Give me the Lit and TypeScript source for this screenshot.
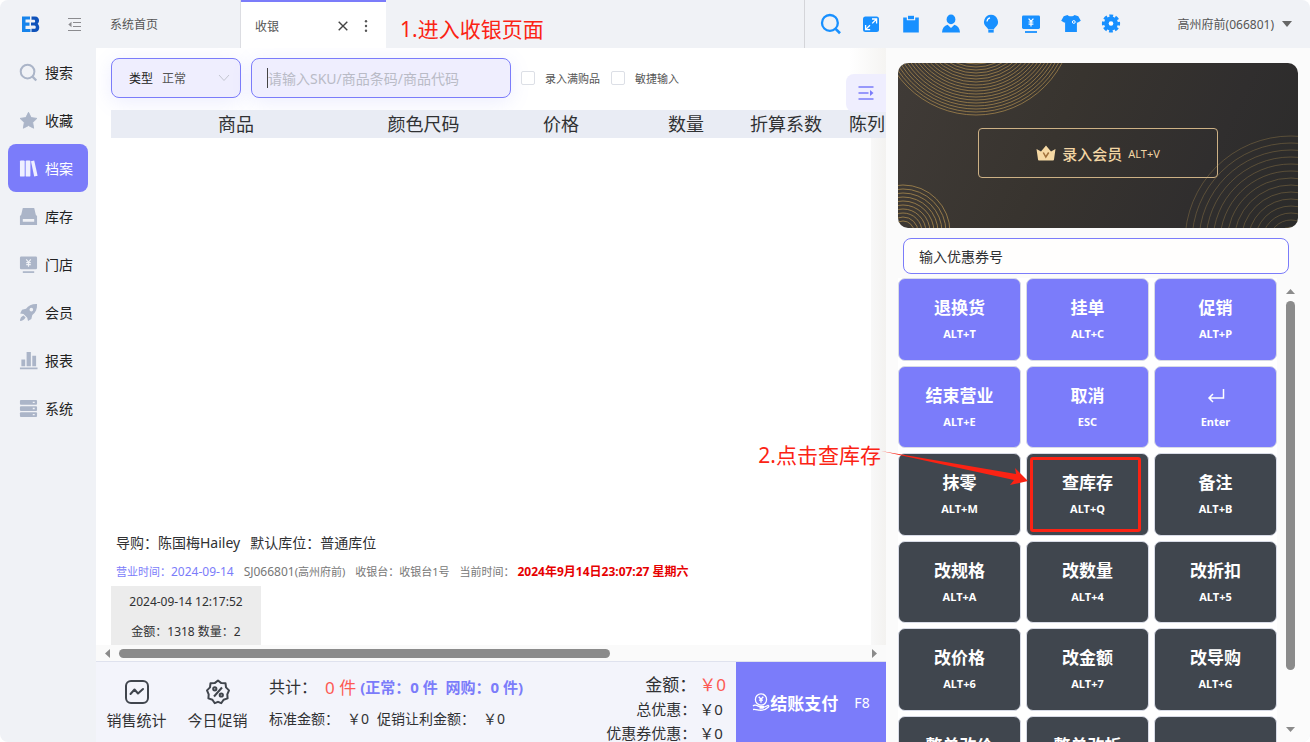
import { LitElement, html, css, svg, nothing } from "lit";
import { customElement } from "lit/decorators.js";
import { classMap } from "lit/directives/class-map.js";

const yen = svg`<path d="M7.6 4.6 10 7.4l2.4-2.8M10 7.4v5M7.6 8h4.8M7.6 10.2h4.8" fill="none" stroke="var(--hole)" stroke-width="1.2"/>`;

const glyphs: Record<string, unknown> = {
  search: svg`<circle cx="9" cy="9" r="7.2" fill="none" stroke="currentColor" stroke-width="2.1"/><path d="m14.2 14.4 4 4" stroke="currentColor" stroke-width="2.4"/>`,
  star: svg`<path d="m10 1.4 2.7 5.5 6.1.9-4.4 4.3 1 6-5.4-2.8-5.4 2.8 1-6L1.2 7.8l6.1-.9z" fill="currentColor" stroke="currentColor" stroke-linejoin="round"/>`,
  books: svg`<rect x="1" y="1.5" width="5" height="17" rx="1" fill="currentColor"/><rect x="7" y="1.5" width="5" height="17" rx="1" fill="currentColor"/><path d="m12.6 2.4 3.4-.8 3.6 15.9-3.6.9z" fill="currentColor"/>`,
  box: svg`<path d="M4 1h12l2 8.5H2z" fill="currentColor"/><path d="M1 9h18v10H1z" fill="currentColor"/><path d="M4 12.5h12v3H4z" fill="var(--hole)"/>`,
  screen: svg`<rect x="1" y="1.5" width="18" height="13.5" rx="1.4" fill="currentColor"/><path d="M4 18h12" stroke="currentColor" stroke-width="1.8"/>${yen}`,
  rocket: svg`<path d="M19 1c-5.5-.2-9 1.4-11.600 5L3.200 7.200 1.200 11l3.600.6 3.900 3.900.8 3.500 3.500-2.200 1-4.200C17.600 10 19.300 6.500 19 1z" fill="currentColor"/><path d="M4.800 13.200 6.900 15.300C5.600 18 3.800 18.700 1 19c.1-2.800 1.200-4.800 3.800-5.800z" fill="currentColor"/><circle cx="13" cy="7" r="1.900" fill="var(--hole)"/>`,
  bars: svg`<path d="M2.500 9h4v7h-4zM8 1h4.500v15H8zM14 5h4v11h-4zM1 17.400h18.500v1.800H1z" fill="currentColor"/>`,
  server: svg`<rect x="1" y="1" width="18" height="5" rx="1" fill="currentColor"/><rect x="1" y="7.500" width="18" height="5" rx="1" fill="currentColor"/><rect x="1" y="14" width="18" height="5" rx="1" fill="currentColor"/><path d="M14.500 3.500h2M14.500 10h2M14.500 16.500h2" stroke="var(--hole)" stroke-width="1.400"/>`,
  expand: svg`<rect x="2" y="2.500" width="16" height="15.500" rx="2.500" fill="currentColor"/><path d="M11 5h4.600v4.600M15.400 5.200l-4.200 4.200M4.600 11v4.600h4.600M4.800 15.400l4.200-4.200" fill="none" stroke="#fff" stroke-width="1.300"/>`,
  clipboard: svg`<path d="M2.200 3.500h3.600v2.800h8.400V3.500h3.600V18.500H2.200z" fill="currentColor"/><path d="M7 1.800h6v3.400H7z" fill="currentColor"/>`,
  user: svg`<ellipse cx="10" cy="5.400" rx="4.400" ry="4.900" fill="currentColor"/><path d="M1 18.500c.3-4.500 2.300-7 5.600-7.800L10 14l3.400-3.300c3.300.8 5.300 3.300 5.600 7.800z" fill="currentColor"/>`,
  bulb: svg`<path d="M10 .8a7 7 0 0 0-4.400 12.400c.8.700 1.300 1.300 1.500 2.200h5.800c.2-.9.700-1.500 1.500-2.200A7 7 0 0 0 10 .8z" fill="currentColor"/><path d="M7.300 17.300h5.400" stroke="currentColor" stroke-width="2.600"/><path d="M6 7.500a4 4 0 0 1 3-3.600" fill="none" stroke="#fff" stroke-width="1.200"/>`,
  shirt: svg`<path d="M6.500 1c1 1.700 6 1.700 7 0l3.800 1.200 2.500 4.500-3.300 2.100-.6-.6V18H4.100V8.200l-.6.6L.2 6.700l2.500-4.500z" fill="currentColor"/><circle cx="12.800" cy="8" r="1.400" fill="none" stroke="#fff"/>`,
  gear: svg`<circle cx="10" cy="9.500" r="6.900" fill="currentColor"/><circle cx="10" cy="9.500" r="7.600" fill="none" stroke="currentColor" stroke-width="3" stroke-dasharray="3.700 2.270" stroke-dashoffset="1.850"/><circle cx="10" cy="9.500" r="2.300" fill="#fff"/>`,
};

const icon = (name: string, size: number) =>
  html`<svg class="icon" width=${size} height=${size} viewBox="0 0 20 20" aria-hidden="true">${glyphs[name]}</svg>`;

const menu = [
  ["search", "搜索"],
  ["star", "收藏"],
  ["books", "档案"],
  ["box", "库存"],
  ["screen", "门店"],
  ["rocket", "会员"],
  ["bars", "报表"],
  ["server", "系统"],
];

const tools = [
  ["search", "搜索"],
  ["expand", "全屏"],
  ["clipboard", "单据"],
  ["user", "会员"],
  ["bulb", "提示"],
  ["screen", "收银"],
  ["shirt", "商品"],
  ["gear", "设置"],
];

const columns = ["商品", "颜色尺码", "价格", "数量", "折算系数", "陈列"];

const keys = [
  ["退换货", "ALT+T"],
  ["挂单", "ALT+C"],
  ["促销", "ALT+P"],
  ["结束营业", "ALT+E"],
  ["取消", "ESC"],
  ["", "Enter"],
  ["抹零", "ALT+M"],
  ["查库存", "ALT+Q"],
  ["备注", "ALT+B"],
  ["改规格", "ALT+A"],
  ["改数量", "ALT+4"],
  ["改折扣", "ALT+5"],
  ["改价格", "ALT+6"],
  ["改金额", "ALT+7"],
  ["改导购", "ALT+G"],
  ["整单改价", ""],
  ["整单改折", ""],
  [" ", ""],
];

const shared = css`
  :host {
    box-sizing: border-box;
    font-family: "Noto Sans", "Noto Sans CJK SC", sans-serif;
    color: #303133;
  }
  * {
    box-sizing: border-box;
  }
  button,
  input,
  select {
    font: inherit;
    color: inherit;
    margin: 0;
    padding: 0;
    border: 0;
    background: none;
    outline: 0;
  }
  svg {
    display: block;
    flex: none;
  }
`;

@customElement("pos-header")
class PosHeader extends LitElement {
  static styles = [
    shared,
    css`
      :host {
        display: flex;
        height: 48px;
        font-size: 12px;
        color: #555;
        position: relative;
      }
      .brand {
        width: 96px;
        display: flex;
        align-items: center;
        gap: 28px;
        padding-left: 22px;
      }
      .tab {
        width: 145px;
        display: flex;
        align-items: center;
        padding: 0 14px;
        color: inherit;
        text-decoration: none;
      }
      .home {
        border-right: 1px solid #dcdde2;
      }
      .current {
        background: #fff;
        border-top: 2px solid #7b7cfa;
        padding-top: 2px;
      }
      .name {
        flex: 1;
      }
      .actions {
        display: flex;
        gap: 12px;
        align-items: center;
      }
      .right {
        margin-left: auto;
        width: 506px;
        border-left: 1px solid #d4d5d9;
        display: flex;
        align-items: center;
        padding: 0 18px 0 15px;
      }
      .tools {
        display: flex;
        gap: 18px;
        color: #1890ff;
        --hole: #fff;
      }
      .tools button {
        width: 22px;
        height: 22px;
        display: grid;
        place-items: center;
      }
      .account {
        margin-left: auto;
        display: flex;
        align-items: center;
        gap: 8px;
      }
      .note {
        position: absolute;
        left: 400px;
        top: 13px;
        line-height: 32px;
        font-size: 21px;
        color: #fb2314;
      }
    `,
  ];
  render() {
    return html`
      <div class="brand">
        <svg width="18" height="17" viewBox="0 0 18 17" aria-hidden="true">
          <path d="M0 .5h8v3H3.500v3H7.500v3.200h-4v3.200H8.500v3.100H0z" fill="#1684ec" />
          <path d="M9.500.5H13c4.500 0 5 5.200 2.600 7.300 3 2.500 1.900 8.200-2.900 8.200H9.500v-3.200h3c1.700 0 1.700-3.300 0-3.300H9V6.600h3c1.500 0 1.500-2.900 0-2.900H9.500z" fill="#0f52ba" />
        </svg>
        <svg width="13" height="13" viewBox="0 0 13 13" aria-hidden="true">
          <path d="M0 .5h13M5 4.500h8M5 8.500h8M0 12.500h13" stroke="#8b8b8f" stroke-width="1" />
          <path d="M3.500 3.800v5.400L.3 6.500z" fill="#8b8b8f" />
        </svg>
      </div>
      <a class="tab home" href="#home">系统首页</a>
      <div class="tab current">
        <span class="name">收银</span>
        <span class="actions">
          <button aria-label="关闭">
            <svg width="10" height="10" viewBox="0 0 10 10"><path d="m.7.7 8.600 8.600M9.300.7.7 9.300" stroke="#444" stroke-width="1.400" /></svg>
          </button>
          <button aria-label="更多">
            <svg width="12" height="12" viewBox="0 0 12 12" fill="#555"><circle cx="6" cy="1.300" r="1.200" /><circle cx="6" cy="6" r="1.200" /><circle cx="6" cy="10.700" r="1.200" /></svg>
          </button>
        </span>
      </div>
      <div class="right">
        <div class="tools">
          ${tools.map(([g, label], i) => html`<button aria-label=${label}>${icon(g, i === 0 ? 22 : 20)}</button>`)}
        </div>
        <button class="account">
          高州府前(066801)
          <svg width="10" height="6" viewBox="0 0 10 6"><path d="M0 0h10L5 6z" fill="#666" /></svg>
        </button>
      </div>
      <div class="note">1.进入收银页面</div>
    `;
  }
}

@customElement("pos-menu")
class PosMenu extends LitElement {
  static styles = [
    shared,
    css`
      nav {
        display: flex;
        flex-direction: column;
        width: 96px;
        padding: 0 8px;
      }
      a {
        display: flex;
        align-items: center;
        gap: 7px;
        height: 48px;
        padding-left: 11px;
        font-size: 14px;
        color: #222;
        text-decoration: none;
        border-radius: 8px;
      }
      .icon {
        color: #abb5c8;
        --hole: #f0f2f6;
      }
      .active {
        background: #7b7cfa;
        color: #fff;
      }
      .active .icon {
        color: #efefff;
      }
    `,
  ];
  render() {
    return html`<nav>
      ${menu.map(
        ([g, label], i) => html`<a href="#${g}" class=${classMap({ active: i === 2 })}>${icon(g, 19)}<span>${label}</span></a>`
      )}
    </nav>`;
  }
}

@customElement("pos-workspace")
class PosWorkspace extends LitElement {
  static styles = [
    shared,
    css`
      :host {
        display: flex;
        flex-direction: column;
        flex: 1;
        min-width: 0;
        background: #fff;
        position: relative;
      }
      .sheet {
        flex: 1;
        min-height: 0;
        overflow: hidden;
        display: flex;
        flex-direction: column;
        padding-left: 15px;
        background: linear-gradient(to left, #f3f2f0, #f8f8f8) right / 15px 100% no-repeat;
      }
      .toolbar {
        display: flex;
        align-items: center;
        height: 62px;
        padding-bottom: 2px;
        background: linear-gradient(to left, #f5f4f2, #fff 36px);
        font-size: 11px;
        color: #555;
      }
      .field {
        display: flex;
        align-items: center;
        height: 40px;
        border: 1px solid #7b7cfa;
        border-radius: 8px;
        background: #efeefe;
        box-shadow: 0 4px 20px rgba(123, 124, 250, 0.14);
        padding: 0 10px 0 17px;
        margin-right: 10px;
      }
      .kind {
        width: 130px;
        font-size: 12px;
        color: #222;
      }
      .kind select {
        appearance: none;
        flex: 1;
        margin-left: 9px;
        color: #555;
      }
      .sku {
        width: 260px;
        font-size: 14px;
        padding-left: 15px;
      }
      .sku input {
        flex: 1;
        height: 20px;
        min-width: 0;
        border-left: 1px solid #444;
      }
      .sku input::placeholder {
        color: #b9bbc6;
        opacity: 1;
      }
      .tick {
        display: flex;
        align-items: center;
        gap: 10px;
        margin-right: 11px;
      }
      .tick input {
        appearance: none;
        width: 14px;
        height: 14px;
        border: 1px solid #dcdfe6;
        border-radius: 2px;
        background: #fff;
      }
      .toggle {
        position: absolute;
        right: 0;
        top: 26px;
        width: 40px;
        height: 38px;
        border-radius: 8px 0 0 8px;
        background: #efeefe;
        display: grid;
        place-items: center;
      }
      table {
        table-layout: fixed;
        border-collapse: collapse;
        width: 825px;
      }
      th {
        height: 28px;
        padding: 0;
        font-size: 18px;
        line-height: 28px;
        font-weight: 400;
        background: #e9ecf4;
      }
      .c0 {
        width: 250px;
      }
      .c1 {
        width: 125px;
      }
      .c2 {
        width: 150px;
      }
      .c5 {
        text-align: left;
        padding-left: 13px;
      }
      .guide {
        margin-top: auto;
        padding-left: 5px;
        display: flex;
        gap: 10px;
        font-size: 14px;
        line-height: 28px;
      }
      .info {
        padding-left: 5px;
        display: flex;
        align-items: center;
        gap: 10px;
        height: 29px;
        font-size: 11px;
        line-height: 28px;
        color: #777;
        white-space: nowrap;
      }
      .info b {
        font-size: 12px;
        color: #e60000;
      }
      .day {
        color: #7b7cfa;
      }
      .code {
        font-size: 12px;
      }
      .ticket {
        width: 150px;
        height: 59px;
        padding-top: 1px;
        background: #ececec;
        font-size: 12px;
        line-height: 30px;
        text-align: center;
      }
      .hbar {
        height: 16px;
        display: flex;
        align-items: center;
        gap: 9px;
        padding: 0 9px;
        background: #fafafa;
      }
      .track {
        flex: 1;
      }
      .thumb {
        width: 66%;
        height: 9px;
        border-radius: 5px;
        background: #8b8b8b;
      }
      .footer {
        display: flex;
        height: 81px;
        border-top: 1px solid #dfe2ee;
        background: #f3f4fb;
        overflow: hidden;
      }
      .stat {
        display: flex;
        flex-direction: column;
        align-items: center;
        gap: 3px;
        width: 81px;
        padding-top: 17px;
        font-size: 15px;
        line-height: 24px;
        white-space: nowrap;
      }
      .totals {
        flex: 1;
        padding: 10px 0 0 11px;
        font-size: 14px;
        line-height: 31px;
        white-space: nowrap;
      }
      .line {
        display: flex;
        gap: 8px;
      }
      .lead {
        font-size: 16px;
      }
      .totals b {
        font-size: 15px;
        color: #7b7cfa;
      }
      .totals .red {
        margin-right: -4px;
      }
      .red {
        color: #fd5a53;
        font-size: 17px;
      }
      .sums {
        display: grid;
        grid-template-columns: auto auto;
        align-content: start;
        justify-items: start;
        column-gap: 3px;
        padding: 11px 10px 0 0;
        font-size: 15px;
        line-height: 24px;
        white-space: nowrap;
      }
      .caption {
        justify-self: end;
      }
      .sums .caption:first-child {
        font-size: 17px;
      }
      .pay {
        width: 150px;
        background: #7b7cfa;
        color: #fff;
        font-size: 14px;
        display: flex;
        align-items: center;
        justify-content: center;
      }
      .pay b {
        font-size: 17px;
        margin-right: 16px;
      }
    `,
  ];
  render() {
    return html`
      <div class="sheet">
        <div class="toolbar">
          <label class="field kind">
            类型
            <select>
              <option>正常</option>
            </select>
            <svg width="12" height="8" viewBox="0 0 12 8"><path d="m1 1 5 5.500L11 1" fill="none" stroke="#c3c5d0" /></svg>
          </label>
          <div class="field sku">
            <input type="text" aria-label="商品" placeholder="请输入SKU/商品条码/商品代码" />
          </div>
          <label class="tick"><input type="checkbox" />录入满购品</label>
          <label class="tick"><input type="checkbox" />敏捷输入</label>
        </div>
        <table>
          <thead>
            <tr>
              ${columns.map((c, i) => html`<th class="c${i}">${c}</th>`)}
            </tr>
          </thead>
        </table>
        <div class="guide"><span>导购：陈国梅Hailey</span><span>默认库位：普通库位</span></div>
        <div class="info">
          <span class="day">营业时间：<span class="code">2024-09-14</span></span>
          <span><span class="code">SJ066801</span>(高州府前)</span>
          <span>收银台：收银台1号</span>
          <span>当前时间： <b>2024年9月14日23:07:27 星期六</b></span>
        </div>
        <div class="ticket">
          <div>2024-09-14 12:17:52</div>
          <div>金额：1318 数量：2</div>
        </div>
      </div>
      <div class="hbar">
        <svg width="5" height="9" viewBox="0 0 5 9"><path d="M5 0v9L0 4.500z" fill="#8b8b8b" /></svg>
        <div class="track"><div class="thumb"></div></div>
        <svg width="5" height="9" viewBox="0 0 5 9"><path d="M0 0v9l5-4.500z" fill="#8b8b8b" /></svg>
      </div>
      <div class="footer">
        <button class="stat">
          <svg width="26" height="26" viewBox="0 0 26 26" fill="none" stroke="#40454d" stroke-width="2" stroke-linecap="round" stroke-linejoin="round">
            <rect x="2" y="2" width="22" height="22" rx="5" />
            <path d="m6.500 15 4-4.500 3.500 4 5-4.500" />
          </svg>
          销售统计
        </button>
        <button class="stat">
          <svg width="26" height="26" viewBox="0 0 26 26" fill="none" stroke="#40454d" stroke-width="2" stroke-linejoin="round">
            <path d="m13 1.500 3.300 2.600 4.200.1.500 4.200 3 3-1.700 3.900.3 4.100-4 1.300-2.400 3.500L13 22.800l-3.200 1.400-2.400-3.500-4-1.300.3-4.100L2 11.400l3-3 .5-4.200 4.200-.1z" />
            <path d="m17 8.500-8 9" />
            <circle cx="9.800" cy="9.800" r="1.600" />
            <circle cx="16.300" cy="16" r="1.600" />
          </svg>
          今日促销
        </button>
        <div class="totals">
          <div class="line"><span class="lead">共计：</span><span class="red">0 件</span><b>(正常：0 件&nbsp; 网购：0 件)</b></div>
          <div class="line"><span>标准金额：</span><span>￥0</span><span>促销让利金额：</span><span>￥0</span></div>
        </div>
        <div class="sums">
          <span class="caption">金额：</span><span class="red">￥0</span>
          <span class="caption">总优惠：</span><span>￥0</span>
          <span class="caption">优惠券优惠：</span><span>￥0</span>
        </div>
        <button class="pay">
          <svg width="18" height="18" viewBox="0 0 18 18" fill="none" stroke="#fff" stroke-width="1.300">
            <circle cx="9" cy="6.500" r="5.600" />
            <path d="m6.700 3.800 2.300 2.500 2.300-2.500M9 6.300v3.500M7 7.200h4M1 13c2-2 4-.5 6 .5h4c1 0 1 1.500 0 1.500H7.500M11.500 14.500l4.500-2c1 0 1 1 .5 1.500-3 3-6 3.500-9 3.200-2-.2-4-1.200-6.500-.7" />
          </svg>
          <b>结账支付</b>F8
        </button>
      </div>
      <button class="toggle" aria-label="展开">
        <svg width="16" height="14" viewBox="0 0 16 14">
          <path d="M.5 1h15M.5 7h10M.5 13h15" stroke="#7b7cfa" stroke-width="1.500" />
          <path d="M12 4v6l3.500-3z" fill="#7b7cfa" />
        </svg>
      </button>
    `;
  }
}

const rings = (cx: number, cy: number, from: number, to: number, step: number, opacity: number) => {
  const out = [];
  for (let r = from; r >= to; r -= step) {
    out.push(svg`<circle cx=${cx} cy=${cy} r=${r} fill="none" stroke="#b08f50" stroke-opacity=${opacity}/>`);
  }
  return out;
};

@customElement("pos-panel")
class PosPanel extends LitElement {
  static styles = [
    shared,
    css`
      :host {
        display: flex;
        flex-direction: column;
        width: 424px;
        flex: none;
        padding: 15px 12px 0;
        background: #fbfbfb;
        position: relative;
      }
      .card {
        display: grid;
        place-items: center;
        height: 165px;
        border-radius: 10px;
        overflow: hidden;
        background: linear-gradient(115deg, #403b37, #38342f 40%, #302e2e 75%, #2b2b2a);
      }
      .art,
      .member {
        grid-area: 1 / 1;
      }
      .art {
        width: 100%;
        height: 165px;
      }
      .member {
        width: 240px;
        height: 50px;
        margin-top: 15px;
        border: 1px solid #cdb185;
        border-radius: 4px;
        display: flex;
        align-items: center;
        justify-content: center;
        gap: 6px;
        color: #f3d6a4;
        font-size: 11px;
      }
      .member b {
        font-size: 15px;
        font-weight: 500;
      }
      .coupon {
        height: 36px;
        margin: 10px 9px 0 5px;
        padding: 0 15px;
        border: 1px solid #7b7cfa;
        border-radius: 8px;
        background: #fffefd;
        font-size: 14px;
      }
      .coupon::placeholder {
        color: #303133;
        opacity: 1;
      }
      .deck {
        flex: 1 1 0;
        min-height: 0;
        margin-top: 4px;
        display: flex;
        overflow: hidden;
      }
      .keys {
        flex: 1;
        display: grid;
        grid-template-columns: repeat(3, 1fr);
        grid-auto-rows: 83px 82px;
        gap: 5px;
        background: #fff;
        align-content: start;
      }
      .key {
        position: relative;
        display: flex;
        flex-direction: column;
        align-items: center;
        gap: 6px;
        padding-top: 17px;
        border: 1px solid #d8dbe6;
        border-radius: 7px;
        background: #40464e;
        color: #fff;
        font-weight: 700;
        font-size: 17px;
        line-height: 24px;
      }
      .key small {
        font-size: 11px;
        line-height: 16px;
      }
      .key svg {
        height: 24px;
      }
      .violet {
        background: #7b7cfa;
      }
      .mark {
        position: absolute;
        inset: 3px 7px 3px 3px;
        border: 3px solid #fb2314;
        border-radius: 3px;
      }
      .vbar {
        width: 21px;
        padding: 11px 0 10px 6px;
        display: flex;
        flex-direction: column;
        align-items: center;
        gap: 7px;
      }
      .vtrack {
        flex: 1;
      }
      .vthumb {
        width: 9px;
        height: 88%;
        border-radius: 5px;
        background: #8b8b8b;
      }
      .hint {
        position: absolute;
        right: 282px;
        top: 391px;
        display: flex;
        color: #fb2314;
        font-size: 21px;
        line-height: 32px;
        white-space: nowrap;
      }
    `,
  ];
  render() {
    return html`
      <div class="card">
        <svg class="art" viewBox="0 0 400 165" preserveAspectRatio="xMidYMid slice" aria-hidden="true">
          ${rings(78, -45, 97, 45, 3, 0.7)} ${rings(5, 169, 47, 10, 4, 0.75)} ${rings(393, 179, 106, 15, 7, 0.35)}
        </svg>
        <button class="member">
          <svg width="20" height="16" viewBox="0 0 20 16">
            <path d="m.5 4 4.500 2.500L10 .5l5 6L19.500 4 18 14.500q0 1-1 1H3q-1 0-1-1z" fill="#f6d9a4" />
            <path d="m7.300 7.500 2.500 4.500 2.900-4.500" fill="none" stroke="#a0713c" stroke-width="1.500" />
          </svg>
          <b>录入会员</b><span>ALT+V</span>
        </button>
      </div>
      <input class="coupon" type="text" aria-label="优惠券号" placeholder="输入优惠券号" />
      <div class="deck">
        <div class="keys">
          ${keys.map(
            ([name, hot], i) => html`<button class=${classMap({ key: true, violet: i < 6 })}>
              ${name
                ? html`<span>${name}</span>`
                : html`<svg width="18" viewBox="0 0 18 24"><path d="M16.500 5v9H2M6 10l-4 4 4 4" fill="none" stroke="#fff" stroke-width="1.500" /></svg>`}
              <small>${hot}</small>
              ${i === 7 ? html`<span class="mark"></span>` : nothing}
            </button>`
          )}
        </div>
        <div class="vbar">
          <svg width="9" height="5" viewBox="0 0 9 5"><path d="M0 5h9L4.500 0z" fill="#8b8b8b" /></svg>
          <div class="vtrack"><div class="vthumb"></div></div>
          <svg width="9" height="5" viewBox="0 0 9 5"><path d="M0 0h9L4.500 5z" fill="#8b8b8b" /></svg>
        </div>
      </div>
      <div class="hint">
        2.点击查库存
        <svg width="147" height="50" viewBox="0 0 147 50" aria-hidden="true">
          <path d="m0 12 135 23-1-6 13 13-18 4 4-5z" fill="#fb2314" />
        </svg>
      </div>
    `;
  }
}

@customElement("app-root")
class AppRoot extends LitElement {
  static styles = css`
    :host {
      display: flex;
      flex-direction: column;
      height: 100vh;
      overflow: hidden;
      background: #f0f2f6;
      border-radius: 8px;
    }
    .body {
      flex: 1;
      min-height: 0;
      display: flex;
    }
  `;
  render() {
    return html`
      <pos-header></pos-header>
      <div class="body">
        <pos-menu></pos-menu>
        <pos-workspace></pos-workspace>
        <pos-panel></pos-panel>
      </div>
    `;
  }
}
